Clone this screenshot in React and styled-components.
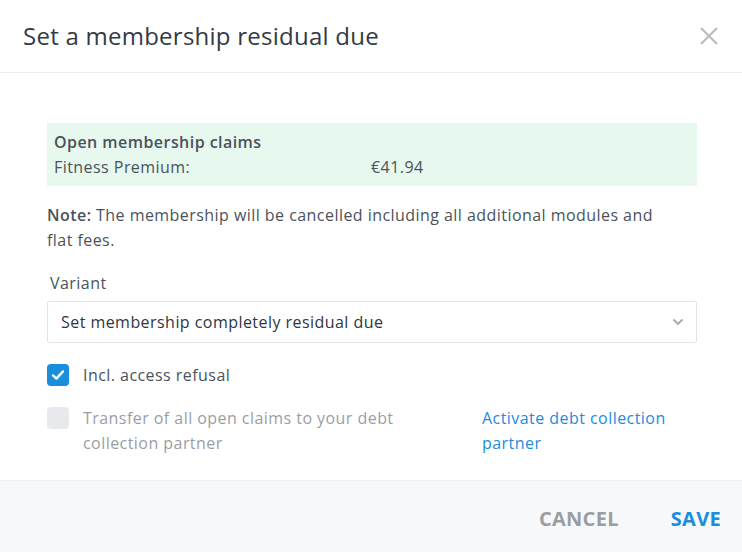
import React from 'react'
import styled, { createGlobalStyle } from 'styled-components'

const GlobalStyle = createGlobalStyle`
  html, body {
    margin: 0;
    padding: 0;
    background: #fff;
  }
  body {
    font-family: "Open Sans", Lato, sans-serif;
    color: #3d4651;
    letter-spacing: 0.45px;
  }
  * {
    box-sizing: border-box;
  }
`

const Dialog = styled.div`
  width: 742px;
  height: 552px;
  display: flex;
  flex-direction: column;
  background: #fff;
`

const Header = styled.header`
  height: 73px;
  flex-shrink: 0;
  display: flex;
  align-items: center;
  justify-content: space-between;
  padding: 0 22px 0 23px;
  border-bottom: 1px solid #ececec;
`

const Title = styled.h2`
  margin: 0 0 2px;
  font-size: 24px;
  font-weight: 400;
  letter-spacing: 0.25px;
  color: #333a44;
`

const CloseButton = styled.button`
  border: 0;
  background: none;
  padding: 0;
  width: 22px;
  height: 22px;
  cursor: pointer;
  display: flex;
  align-items: center;
  justify-content: center;
`

const Body = styled.div`
  flex: 1;
  padding: 50px 45px 0 47px;
  display: flex;
  flex-direction: column;
`

const ClaimsBox = styled.div`
  background: #e7f8ee;
  padding: 7px 7px 6px;
  width: 650px;
  font-size: 16px;
  line-height: 25px;
`

const ClaimsTitle = styled.div`
  font-weight: 600;
  color: #4a525c;
`

const ClaimsRow = styled.div`
  display: grid;
  grid-template-columns: 317px 1fr;
  color: #4a525c;
`

const Note = styled.p`
  margin: 17px 0 0;
  max-width: 632px;
  font-size: 16px;
  line-height: 25px;
  color: #4a525c;

  strong {
    font-weight: 600;
  }
`

const FieldLabel = styled.label`
  display: block;
  margin: 18px 0 0 3px;
  font-size: 16px;
  line-height: 25px;
  color: #4a525c;
`

const Select = styled.div`
  margin-top: 5px;
  width: 650px;
  height: 42px;
  border: 1px solid #e2e2e2;
  border-radius: 2px;
  display: flex;
  align-items: center;
  justify-content: space-between;
  padding: 0 12px 0 13px;
  font-size: 16px;
  color: #2f3640;
`

const CheckRow = styled.div`
  display: grid;
  grid-template-columns: 36px 399px 1fr;
  margin-top: ${p => p.$gap}px;
  font-size: 16px;
  line-height: 25px;
`

const Box = styled.span`
  width: 22px;
  height: 22px;
  border-radius: 4px;
  background: ${p => (p.$checked ? '#1a8ddb' : '#e8e9ec')};
  display: flex;
  align-items: center;
  justify-content: center;
  margin-top: 1px;
`

const CheckLabel = styled.span`
  padding-right: 30px;
  color: ${p => (p.$disabled ? '#9a9ea3' : '#4a525c')};
`

const Link = styled.a`
  color: #1a8ddb;
  text-decoration: none;
  cursor: pointer;
`

const Footer = styled.footer`
  height: 72px;
  flex-shrink: 0;
  background: #f7f8fa;
  border-top: 1px solid #eef0f2;
  display: flex;
  align-items: center;
  justify-content: flex-end;
  gap: 52px;
  padding: 4px 21px 0 0;
`

const FooterButton = styled.button`
  border: 0;
  background: none;
  padding: 0;
  font-family: inherit;
  font-size: 20px;
  font-weight: 700;
  letter-spacing: 0.3px;
  color: ${p => (p.$primary ? '#1a8ddb' : '#9a9ea3')};
  cursor: pointer;
`

function Checkbox ({ checked }) {
  return (
    <Box $checked={checked}>
      {checked && (
        <svg width="16" height="16" viewBox="0 0 16 16">
          <path d="M3 8.4 L6.4 11.6 L13 4.4" fill="none" stroke="#fff" strokeWidth="2.4" strokeLinecap="round" strokeLinejoin="round" />
        </svg>
      )}
    </Box>
  )
}

export default function App () {
  return (
    <Dialog>
      <GlobalStyle />
      <Header>
        <Title>Set a membership residual due</Title>
        <CloseButton aria-label="Close">
          <svg width="18" height="18" viewBox="0 0 18 18">
            <path d="M1 1 L17 17 M17 1 L1 17" stroke="#bcbcbc" strokeWidth="2.2" />
          </svg>
        </CloseButton>
      </Header>
      <Body>
        <ClaimsBox>
          <ClaimsTitle>Open membership claims</ClaimsTitle>
          <ClaimsRow>
            <span>Fitness Premium:</span>
            <span>€41.94</span>
          </ClaimsRow>
        </ClaimsBox>
        <Note>
          <strong>Note:</strong> The membership will be cancelled including all additional modules and flat fees.
        </Note>
        <FieldLabel>Variant</FieldLabel>
        <Select>
          <span>Set membership completely residual due</span>
          <svg width="12" height="8" viewBox="0 0 12 8">
            <path d="M1.5 1.5 L6 6 L10.5 1.5" fill="none" stroke="#a5a8ad" strokeWidth="1.8" />
          </svg>
        </Select>
        <CheckRow $gap={20}>
          <Checkbox checked />
          <CheckLabel>Incl. access refusal</CheckLabel>
        </CheckRow>
        <CheckRow $gap={18}>
          <Checkbox />
          <CheckLabel $disabled>Transfer of all open claims to your debt collection partner</CheckLabel>
          <Link>Activate debt collection partner</Link>
        </CheckRow>
      </Body>
      <Footer>
        <FooterButton>CANCEL</FooterButton>
        <FooterButton $primary>SAVE</FooterButton>
      </Footer>
    </Dialog>
  )
}
